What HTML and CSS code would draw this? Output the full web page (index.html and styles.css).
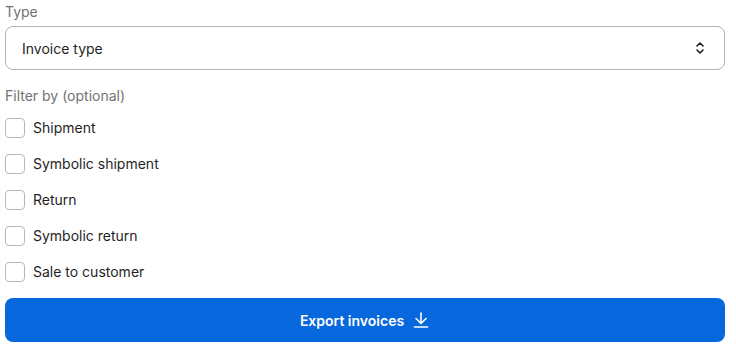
FILE: index.html
```html
<!DOCTYPE html>
<html>
<head>
<meta charset="utf-8">
<link rel="stylesheet" href="styles.css">
</head>
<body>
<div class="form">
  <div class="label">Type</div>
  <div class="select">
    <span>Invoice type</span>
    <svg class="chev" width="10" height="14" viewBox="0 0 10 14" fill="none" stroke="#1f1f1f" stroke-width="1.6" stroke-linecap="round" stroke-linejoin="round"><path d="M2 5 L5 2 L8 5"/><path d="M2 9 L5 12 L8 9"/></svg>
  </div>
  <div class="label label-filter">Filter by (optional)</div>
  <div class="checks">
    <label class="row"><span class="box"></span>Shipment</label>
    <label class="row"><span class="box"></span>Symbolic shipment</label>
    <label class="row"><span class="box"></span>Return</label>
    <label class="row"><span class="box"></span>Symbolic return</label>
    <label class="row"><span class="box"></span>Sale to customer</label>
  </div>
  <button class="btn">Export invoices
    <svg width="18" height="18" viewBox="0 0 18 18" fill="none" stroke="#fff" stroke-width="1.6" stroke-linecap="round" stroke-linejoin="round"><path d="M9 2 V12"/><path d="M4 7.5 L9 12.5 L14 7.5"/><path d="M2.5 16 H15.5"/></svg>
  </button>
</div>
</body>
</html>
```
FILE: styles.css
```css
html, body { margin: 0; padding: 0; background: #fff; }
body { font-family: Inter, "Noto Sans", sans-serif; font-size: 14px; color: #1f1f1f; }
.form { padding: 2px 11px 0 5px; display: flex; flex-direction: column; }
.label { line-height: 20px; color: #727272; font-size: 14px; }
.select {
  margin-top: 4px; height: 44px; box-sizing: border-box;
  border: 1px solid #b3b3b3; border-radius: 8px;
  display: flex; align-items: center; justify-content: space-between;
  padding: 0 19px 0 16px; font-size: 14px; color: #1f1f1f;
}
.chev { display: block; }
.label-filter { margin-top: 16px; }
.checks { margin-top: 12px; display: flex; flex-direction: column; gap: 16px; }
.row { display: flex; align-items: center; gap: 8px; line-height: 20px; height: 20px; font-size: 14px; color: #1f1f1f; }
.box { width: 20px; height: 20px; box-sizing: border-box; border: 1px solid #b8b8b8; border-radius: 4px; background: #fff; }
.btn {
  margin-top: 16px; height: 44px; border: none; border-radius: 8px;
  background: #0767dd; color: #fff; font-family: Inter, "Noto Sans", sans-serif;
  font-size: 14px; font-weight: 600; display: flex; align-items: center; justify-content: center; gap: 8px;
  padding: 0;
}
.btn svg { display: block; }
```
